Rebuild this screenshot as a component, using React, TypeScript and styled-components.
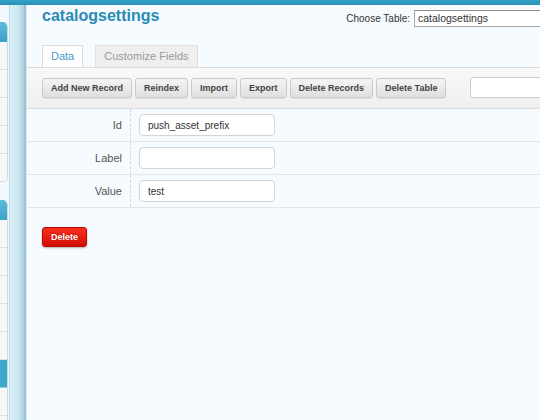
import React from "react";
import styled, { createGlobalStyle, css } from "styled-components";

const GlobalStyle = createGlobalStyle`
  html, body {
    margin: 0;
    padding: 0;
    overflow: hidden;
    background: #f5fbfe;
  }
  body {
    font-family: "Liberation Sans", Arial, Helvetica, sans-serif;
  }
  * { box-sizing: border-box; }
`;

const Page = styled.div`
  width: 620px;
  height: 420px;
  display: flex;
  flex-direction: column;
  overflow: hidden;
`;

const TopBar = styled.div`
  height: 5px;
  flex-shrink: 0;
  background: linear-gradient(#32a2c6, #2990b6);
`;

const Body = styled.div`
  flex: 1;
  display: flex;
  min-height: 0;
`;

const Sidebar = styled.div`
  width: 9px;
  flex-shrink: 0;
  padding-top: 17px;
  display: flex;
  flex-direction: column;
  gap: 18px;
  background: #f2f9fc;
  overflow: hidden;
`;

const Panel = styled.div`
  width: 8px;
  flex-shrink: 0;
  background: #f7f7f7;
  border-right: 1px solid #cfd8db;
  border-bottom: 1px solid #cfd8db;
  border-radius: 0 5px 5px 0;
  overflow: hidden;
`;

const PanelHeader = styled.div`
  height: 20px;
  background: linear-gradient(#5bbcdb, #3aa2c8);
`;

const PanelRow = styled.div<{ $active?: boolean }>`
  height: 28px;
  border-bottom: 1px solid #dedede;
  background: #f7f7f7;
  ${(p) =>
    p.$active &&
    css`
      background: #3fa8cc;
      border-bottom-color: #8ccbe0;
    `}
  &:last-child {
    border-bottom: none;
    height: 27px;
  }
`;

const Splitter = styled.div`
  width: 18px;
  flex-shrink: 0;
  border-left: 1px solid #b8dceb;
  border-right: 1px solid #d2eaf3;
  background: linear-gradient(
    to right,
    #d8eff7 0%,
    #cde9f2 50%,
    #b2d5df 82%,
    #95bdc9 94%,
    #a6cad6 100%
  );
`;

const Main = styled.div`
  flex: 1;
  min-width: 0;
  background: #f5fbfe;
  display: flex;
  flex-direction: column;
`;

const Header = styled.div`
  display: flex;
  align-items: flex-start;
  justify-content: space-between;
  padding: 1px 15px 0 15px;
`;

const Title = styled.h1`
  margin: 0;
  font-size: 16px;
  line-height: 20px;
  font-weight: bold;
  color: #2a8ab4;
`;

const TablePicker = styled.div`
  display: flex;
  align-items: center;
  gap: 4px;
  margin-top: 4px;
  flex-shrink: 0;
`;

const PickerLabel = styled.span`
  font-size: 10px;
  color: #333;
`;

const Select = styled.div`
  width: 191px;
  height: 17px;
  border: 1px solid #a6a6a6;
  border-top-color: #8e8e8e;
  background: #fff;
  font-size: 10.5px;
  line-height: 15px;
  padding-left: 3px;
  color: #333;
`;

const Tabs = styled.div`
  display: flex;
  gap: 12px;
  padding: 0 15px;
  margin-top: 18px;
`;

const Tab = styled.div<{ $active?: boolean }>`
  height: 22px;
  padding: 0 8px;
  line-height: 21px;
  font-size: 11px;
  border: 1px solid #e0e0e0;
  border-bottom: none;
  background: #efefef;
  color: #9a9a9a;
  ${(p) =>
    p.$active &&
    css`
      background: #fff;
      color: #3f9cc7;
      border-color: #dcdcdc;
    `}
`;

const Toolbar = styled.div`
  display: flex;
  align-items: center;
  gap: 3px;
  padding: 9px 15px 10px 15px;
  border-top: 1px solid #dcdcdc;
  border-bottom: 1px solid #dcdcdc;
  background: linear-gradient(#f9f9f9, #efefef);
  overflow: hidden;
`;

const ToolButton = styled.button`
  height: 20px;
  padding: 0 8px;
  flex-shrink: 0;
  border: 1px solid #c9c9c9;
  border-radius: 3px;
  background: linear-gradient(#f5f5f5, #dfdfdf);
  box-shadow: 0 1px 1px rgba(0, 0, 0, 0.08);
  font-family: "Liberation Sans", Arial, sans-serif;
  font-size: 9px;
  font-weight: bold;
  color: #444;
  line-height: 18px;
  white-space: nowrap;
  cursor: pointer;
`;

const SearchInput = styled.input`
  margin-left: 21px;
  width: 140px;
  flex-shrink: 0;
  height: 21px;
  border: 1px solid #cccccc;
  border-radius: 3px;
  background: #fff;
`;

const Form = styled.div`
  display: flex;
  flex-direction: column;
`;

const FormRow = styled.div`
  display: flex;
  height: 33px;
  border-bottom: 1px solid #e3e6e8;
`;

const FieldLabel = styled.label`
  width: 104px;
  flex-shrink: 0;
  display: flex;
  align-items: center;
  justify-content: flex-end;
  padding-right: 8px;
  border-right: 1px dashed #d6d9db;
  font-size: 11px;
  color: #555;
`;

const FieldCell = styled.div`
  padding: 5px 8px;
`;

const TextInput = styled.input`
  width: 136px;
  height: 22px;
  border: 1px solid #d4d4d4;
  border-radius: 4px;
  background: #fff;
  padding: 0 8px;
  font-family: "Liberation Sans", Arial, sans-serif;
  font-size: 10px;
  color: #333;
  outline: none;
`;

const Actions = styled.div`
  padding: 18px 15px;
`;

const DangerButton = styled.button`
  height: 20px;
  padding: 0 8px;
  border: 1px solid #b80a00;
  border-radius: 3px;
  background: linear-gradient(#f8301f, #d40b00);
  box-shadow: 0 1px 2px rgba(0, 0, 0, 0.3);
  font-family: "Liberation Sans", Arial, sans-serif;
  font-size: 9px;
  font-weight: bold;
  color: #fff;
  text-shadow: 0 -1px 0 rgba(120, 0, 0, 0.4);
  line-height: 18px;
  cursor: pointer;
`;

const toolbarActions = [
  "Add New Record",
  "Reindex",
  "Import",
  "Export",
  "Delete Records",
  "Delete Table",
];

const fields = [
  { label: "Id", value: "push_asset_prefix" },
  { label: "Label", value: "" },
  { label: "Value", value: "test" },
];

export default function App() {
  return (
    <>
      <GlobalStyle />
      <Page>
        <TopBar />
        <Body>
          <Sidebar>
            <Panel>
              <PanelHeader />
              {[0, 1, 2, 3, 4].map((i) => (
                <PanelRow key={i} />
              ))}
            </Panel>
            <Panel>
              <PanelHeader />
              {[0, 1, 2, 3, 4, 5, 6, 7].map((i) => (
                <PanelRow key={i} $active={i === 5} />
              ))}
            </Panel>
          </Sidebar>
          <Splitter />
          <Main>
            <Header>
              <Title>catalogsettings</Title>
              <TablePicker>
                <PickerLabel>Choose Table:</PickerLabel>
                <Select>catalogsettings</Select>
              </TablePicker>
            </Header>
            <Tabs>
              <Tab $active>Data</Tab>
              <Tab>Customize Fields</Tab>
            </Tabs>
            <Toolbar>
              {toolbarActions.map((a) => (
                <ToolButton key={a}>{a}</ToolButton>
              ))}
              <SearchInput />
            </Toolbar>
            <Form>
              {fields.map((f) => (
                <FormRow key={f.label}>
                  <FieldLabel>{f.label}</FieldLabel>
                  <FieldCell>
                    <TextInput defaultValue={f.value} />
                  </FieldCell>
                </FormRow>
              ))}
            </Form>
            <Actions>
              <DangerButton>Delete</DangerButton>
            </Actions>
          </Main>
        </Body>
      </Page>
    </>
  );
}
